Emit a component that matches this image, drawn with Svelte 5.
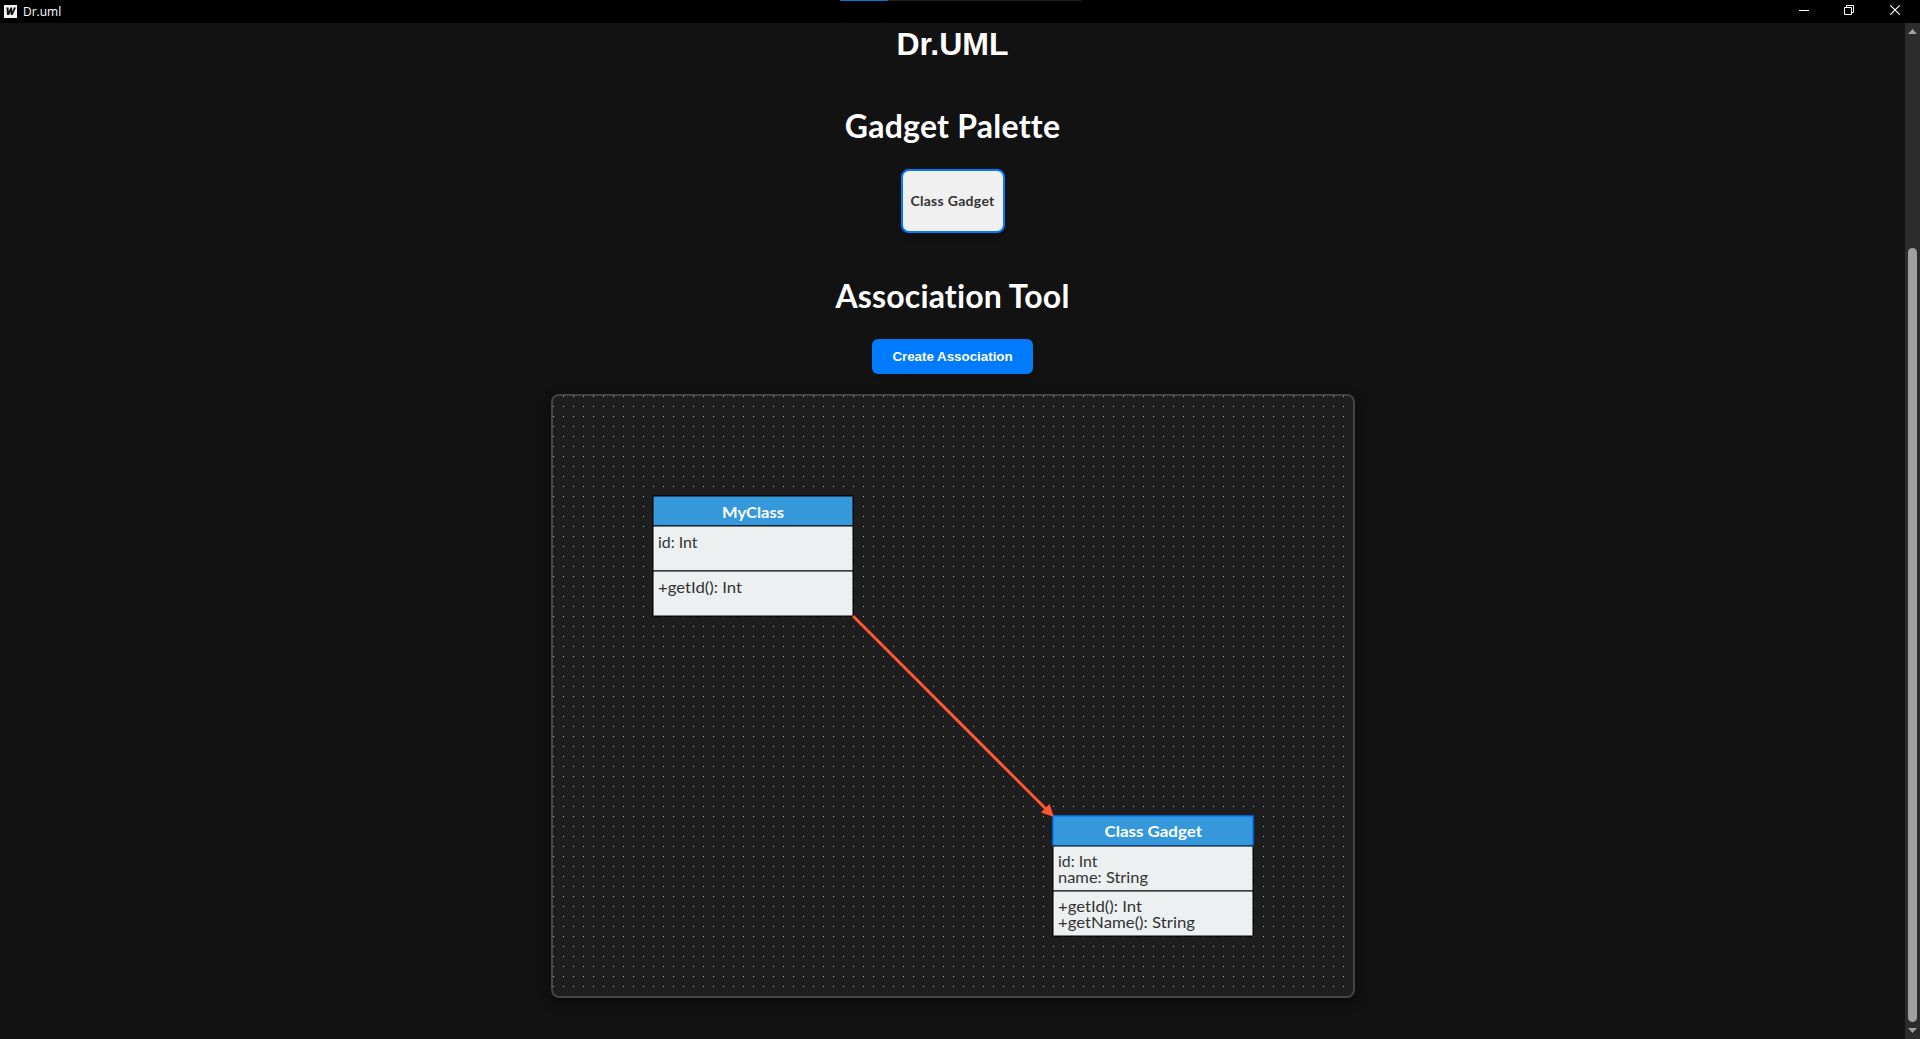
<script>
  const gadgets = [
    { name: 'MyClass', x: 100, y: 100, textY: 100, tone: 'dark', title: [169, 62], attrs: [['id: Int', 39.5]], methods: [['+getId(): Int', 84]] },
    { name: 'Class Gadget', x: 500, y: 420, textY: 419, tone: 'active', title: [551.5, 97.5], attrs: [['id: Int', 39.5], ['name: String', 90]], methods: [['+getId(): Int', 84], ['+getName(): String', 137]] }
  ];
</script>

<div class="window">
  <header class="titlebar">
    <div class="progress"><span></span></div>
    <svg class="logo" width="13" height="13" viewBox="0 0 13 13"><rect width="13" height="13" fill="#f4f4f4" /><path d="M2.4 2.5h2.1l.3 4 1.6-4h1.7l.3 4 1.6-4H12L8.6 10H6.7l-.2-3.2L5.100 10H3.100z" fill="#111" /></svg>
    <span class="app-name">Dr.uml</span>
    <svg class="controls" width="120" height="22" viewBox="0 0 120 22" fill="none" stroke="#fff">
      <path d="M10 10.5h10" />
      <path d="M55.5 7.5h7v7h-7zM57.5 7V5.500h7v7H63" />
      <path d="M101.300 5.300l9.400 9.400M110.700 5.300l-9.400 9.400" stroke-width="1.2" />
    </svg>
  </header>
  <div class="viewport">
    <main>
      <h1 class="brand">Dr.UML</h1>
      <h1 class="palette-title">Gadget Palette</h1>
      <div class="gadget">Class Gadget</div>
      <h1 class="tool-title">Association Tool</h1>
      <button>Create Association</button>
      <div class="canvas">
        <svg width="800" height="600" viewBox="0 0 800 600">
          <defs>
            <pattern id="dots" width="10" height="10" patternUnits="userSpaceOnUse"><rect width="1" height="1" fill="#b4b4b4" /></pattern>
          </defs>
          <rect width="800" height="600" fill="url(#dots)" />
          {#each gadgets as g}
            <rect class="frame" x={g.x} y={g.y} width="200" height="120" />
            <rect class="head {g.tone}" x={g.x} y={g.y} width="200" height="30" />
            <rect class="body" x={g.x} y={g.y + 30} width="200" height="45" />
            <rect class="body" x={g.x} y={g.y + 75} width="200" height="45" />
            <text class="name" x={g.title[0]} y={g.textY + 22} textLength={g.title[1]} lengthAdjust="spacingAndGlyphs">{g.name}</text>
            {#each g.attrs as [label, width], i}
              <text x={g.x + 5} y={g.textY + 52 + i * 16} textLength={width} lengthAdjust="spacingAndGlyphs">{label}</text>
            {/each}
            {#each g.methods as [label, width], i}
              <text x={g.x + 5} y={g.textY + 97 + i * 16} textLength={width} lengthAdjust="spacingAndGlyphs">{label}</text>
            {/each}
          {/each}
          <path d="M300 220L496 416" stroke="#ff5733" stroke-width="3" />
          <path d="M501 421L488 416.500 496.500 408z" fill="#ff5733" />
        </svg>
      </div>
    </main>
    <aside class="scrollbar">
      <svg width="15" height="16" viewBox="0 0 15 16"><path d="M3 11L7.500 6 12 11z" fill="#a0a0a0" /></svg>
      <div class="thumb"></div>
      <svg width="15" height="16" viewBox="0 0 15 16"><path d="M3 6L7.500 11 12 6z" fill="#a0a0a0" /></svg>
    </aside>
  </div>
</div>

<style>
  :global(body) { margin: 0; background: #121212; }
  .window { height: 1039px; display: flex; flex-direction: column; background: #121212; color: #fff; overflow: hidden; font-family: Lato, sans-serif; font-variant-ligatures: none; }
  .titlebar { height: 23px; flex: none; display: flex; align-items: flex-start; background: #000; position: relative; }
  .progress { position: absolute; top: 0; left: 840px; width: 241px; height: 1px; background: #222; }
  .progress span { display: block; width: 48px; height: 1px; background: #0078d7; }
  .logo { margin: 5px 0 0 4px; }
  .app-name { margin-left: 6px; font: 12px/23px "Open Sans", sans-serif; }
  .controls { margin-left: auto; margin-right: 11px; }
  .viewport { flex: 1; display: flex; }
  main { flex: 1; display: flex; flex-direction: column; align-items: center; }
  h1 { margin: 0; font-size: 32px; line-height: 40px; height: 40px; white-space: nowrap; }
  .brand { font-family: "Liberation Sans", Arial, sans-serif; margin-top: 1px; }
  .palette-title { margin-top: 42px; letter-spacing: 0.25px; }
  .gadget { box-sizing: border-box; width: 104px; height: 64px; margin-top: 23px; padding-bottom: 2px; border: 2px solid #007bff; border-radius: 8px; background: #f0f0f0; color: #333; font-size: 14px; font-weight: 700; letter-spacing: 0.3px; display: flex; align-items: center; justify-content: center; white-space: nowrap; box-shadow: 0 4px 6px #0003; }
  .tool-title { margin-top: 43px; letter-spacing: 0.15px; }
  button { width: 161px; height: 35px; margin: 23px 0 0; padding: 0; border: 0; border-radius: 6px; background: #007bff; color: #fff; font: bold 13.333px "Liberation Sans", Arial, sans-serif; box-shadow: 0 4px 6px #0003; }
  .canvas { margin-top: 20px; width: 800px; height: 600px; border: 2px solid #444; border-radius: 8px; background: #1e1e1e; overflow: hidden; box-shadow: 0 4px 12px #0008; }
  .canvas svg { display: block; }
  rect.frame { fill: none; stroke: #000; }
  rect.head { fill: #3498db; stroke-width: 1; }
  rect.dark { stroke: #000; }
  rect.active { stroke: #007bff; stroke-width: 1.500; }
  rect.body { fill: #ecf0f1; stroke: #000; stroke-width: 1; }
  text { fill: #333; font-size: 16px; }
  text.name { fill: #fff; font-weight: 700; }
  .scrollbar { width: 15px; background: #2c2c2c; display: flex; flex-direction: column; }
  .thumb { width: 9px; height: 774px; margin: 209px 3px 0; border-radius: 5px; background: #9f9f9f; }
</style>
